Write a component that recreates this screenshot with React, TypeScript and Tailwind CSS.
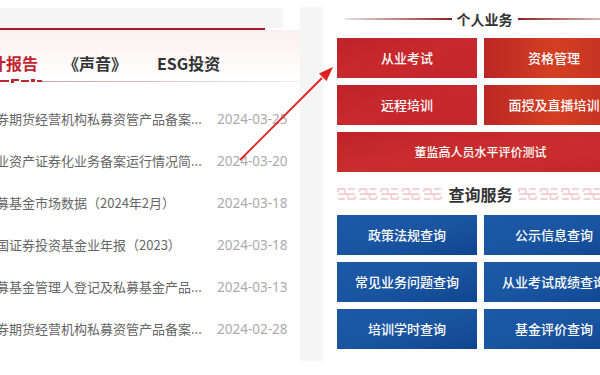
const news = [
  { title: '券期货经营机构私募资管产品备案...', date: '2024-03-25' },
  { title: '业资产证券化业务备案运行情况简...', date: '2024-03-20' },
  { title: '募基金市场数据（2024年2月）', date: '2024-03-18' },
  { title: '国证券投资基金业年报（2023）', date: '2024-03-18' },
  { title: '募基金管理人登记及私募基金产品...', date: '2024-03-13' },
  { title: '券期货经营机构私募资管产品备案...', date: '2024-02-28' },
];

const queries = ['政策法规查询', '公示信息查询', '常见业务问题查询', '从业考试成绩查询', '培训学时查询', '基金评价查询'];

const cjk = { fontFamily: '"Noto Sans CJK SC", "Noto Sans", sans-serif' };

function CloudStrip({ id }: { id: string }) {
  return (
    <svg className="h-[14px] flex-1" preserveAspectRatio="none">
      <defs>
        <pattern id={id} width="21.5" height="14" patternUnits="userSpaceOnUse">
          <path
            d="M1 2H8M11 2H18M1 7H18M1 12H8M11 12H18M8 2V7M11 7V12M1 2V5M18 9V12"
            stroke="#efc4c8"
            strokeWidth="1.4"
            fill="none"
          />
        </pattern>
      </defs>
      <rect width="100%" height="14" fill={`url(#${id})`} />
    </svg>
  );
}

export default function App() {
  return (
    <div className="relative w-[600px] h-[375px] overflow-hidden bg-white flex" style={cjk}>
      {/* left news column */}
      <div className="flex shrink-0 w-[337px]">
        <div className="w-[300px] shrink-0 flex flex-col">
          <div className="h-[8px]" />
          <div className="w-[283px] h-[20px] bg-[#f5f5f5]" />
          <div className="w-[265px] h-[2px] bg-[#aa1a2b]" />
          <div className="h-[49px] bg-linear-to-b from-[#fbeff0] to-white flex items-start pt-[21px] text-[16px] font-bold leading-6 whitespace-nowrap">
            <span className="ml-[-26px] text-[#c0232d]">统计报告</span>
            <span className="ml-[25px] text-[#333]">《声音》</span>
            <span className="ml-[30px] text-[#333]">ESG投资</span>
          </div>
          <div className="flex items-center h-[4px]">
            <svg width="42" height="4" className="shrink-0">
              <rect x="0" y="1" width="9" height="2" fill="#c0272d" />
              <rect x="11" y="0" width="8" height="2" fill="#c0272d" />
              <rect x="11" y="2" width="3" height="2" fill="#c0272d" />
              <rect x="21" y="1" width="8" height="2" fill="#c0272d" />
              <rect x="31" y="0" width="4" height="3" fill="#c0272d" />
              <rect x="37" y="1" width="5" height="2" fill="#c0272d" />
            </svg>
            <div className="flex-1 h-px bg-linear-to-r from-[#caa5a8] to-[#eee]" />
          </div>
          <div className="mt-[15px] flex flex-col">
            {news.map((n, i) => (
              <div key={i} className="h-[42px] flex items-center whitespace-nowrap">
                <span className="w-[221px] shrink-0 ml-[-4px] text-[13px] text-[#666]">{n.title}</span>
                <span className="text-[13.5px] text-[#ababab]" style={{ fontFamily: '"Noto Sans", sans-serif' }}>
                  {n.date}
                </span>
              </div>
            ))}
          </div>
        </div>
        <div className="w-[23px] shrink-0 mt-[7px] h-[354px] bg-[#f5f5f5]" />
      </div>

      {/* right services column */}
      <div className="w-[287px] shrink-0 flex flex-col">
        <div className="h-[38px] flex items-center gap-[5px] pl-[8px]">
          <div className="flex-1 h-[1.5px] bg-linear-to-r from-[#e2e2e2] to-[#8e1a22]" />
          <span className="text-[14px] font-bold text-[#333] leading-5">个人业务</span>
          <div className="flex-1 h-[1.5px] bg-linear-to-r from-[#8e1a22] to-[#e2e2e2]" />
        </div>
        <div className="grid grid-cols-2 gap-[7px] text-white text-[13px] font-medium">
          <div className="h-[40px] flex items-center justify-center bg-linear-to-br from-[#bd2329] via-[#c8292d] to-[#c2262b]">从业考试</div>
          <div className="h-[40px] flex items-center justify-center bg-linear-to-r from-[#bb2624] via-[#d43f22] to-[#c22c23]">资格管理</div>
          <div className="h-[40px] flex items-center justify-center bg-linear-to-br from-[#bd2329] via-[#c8292d] to-[#c2262b]">远程培训</div>
          <div className="h-[40px] flex items-center justify-center bg-linear-to-r from-[#bb2624] via-[#d43f22] to-[#c22c23]">面授及直播培训</div>
          <div className="col-span-2 h-[40px] flex items-center justify-center text-[12px] bg-linear-to-br from-[#be2428] via-[#ca2d2e] to-[#c4282b]">
            董监高人员水平评价测试
          </div>
        </div>
        <div className="h-[43px] flex items-center gap-[5px]">
          <CloudStrip id="cloud-l" />
          <span className="text-[16px] font-bold text-[#333] leading-6">查询服务</span>
          <CloudStrip id="cloud-r" />
        </div>
        <div className="grid grid-cols-2 gap-[7px] text-white text-[13px] font-medium">
          {queries.map((q) => (
            <div
              key={q}
              className="h-[40px] flex items-center justify-center bg-linear-to-br from-[#1c58a6] via-[#1a55a2] to-[#0f4590]"
            >
              {q}
            </div>
          ))}
        </div>
      </div>

      {/* annotation arrow */}
      <svg className="absolute inset-0 pointer-events-none" width="600" height="375">
        <line x1="240" y1="160" x2="322" y2="78" stroke="#e0201f" strokeWidth="1.8" />
        <polygon points="333,67 326.5,81 319,73.5" fill="#e0201f" />
      </svg>
    </div>
  );
}
